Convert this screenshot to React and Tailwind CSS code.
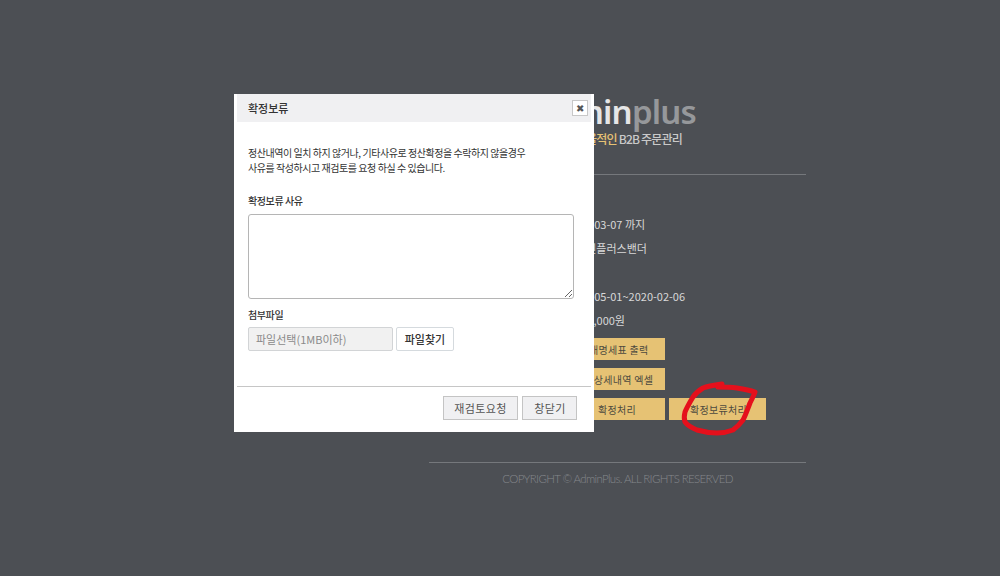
import React from "react";

const kr = "font-['Noto_Sans_CJK_KR','Noto_Sans',sans-serif]";

const PageRow = ({ children, className = "" }) => (
  <div className={`pl-[137px] text-[11px] leading-[16px] text-[#d8d8d8] whitespace-nowrap ${className}`}>{children}</div>
);

const GoldButton = ({ children, className = "" }) => (
  <button className={`h-[22px] bg-[#e6c274] text-[10px] tracking-[0.3px] text-[#4d4a3f] whitespace-nowrap ${className}`}>{children}</button>
);

const App = () => {
  return (
    <div className={`relative w-[1000px] h-[576px] overflow-hidden bg-[#4c4f54] ${kr}`}>
      {/* Page behind the dialog */}
      <div className="ml-[429px] w-[377px] pt-[92px]">
        <div className="flex justify-end pr-[110px] h-[39px]">
          <span className="font-['Noto_Sans',sans-serif] text-[33px] leading-[39px] tracking-[-0.8px] font-semibold text-[#e6e6e6]">
            Admin<span className="text-[#96989b]">plus</span>
          </span>
        </div>
        <div className="flex justify-end pr-[124px] h-[16px] text-[12px] leading-[16px] font-medium tracking-[-0.8px] text-[#c9c9c9]">
          <span><span className="text-[#e6c274]">효율적인</span> B2B 주문관리</span>
        </div>
        <div className="mt-[27px] h-px bg-[#75787c]" />

        <div className="mt-[41px] flex flex-col">
          <PageRow>2020-03-07 까지</PageRow>
          <PageRow className="mt-[8px]">어드민플러스밴더</PageRow>
          <PageRow className="mt-[32px]">2019-05-01~2020-02-06</PageRow>
          <PageRow className="mt-[8px]">1,000,000원</PageRow>
        </div>

        <div className="mt-[10px] pl-[90px] flex flex-col gap-[8px]">
          <GoldButton className="w-[146px] pl-[44px]">거래명세표 출력</GoldButton>
          <GoldButton className="w-[146px] pl-[44px]">정산상세내역 엑셀</GoldButton>
          <div className="flex gap-[4px]">
            <GoldButton className="w-[146px] pl-[50px]">확정처리</GoldButton>
            <GoldButton className="w-[97px] pl-[2px]">확정보류처리</GoldButton>
          </div>
        </div>

        <div className="mt-[42px] h-px bg-[#75787c]" />
        <p className="mt-[8px] text-center font-['Lato',sans-serif] font-light text-[11.5px] leading-[16px] tracking-[-0.65px] text-[#85888c]">
          COPYRIGHT © AdminPlus. ALL RIGHTS RESERVED
        </p>
      </div>

      {/* Hand drawn red circle */}
      <svg className="absolute left-[680px] top-[380px]" width="80" height="60" viewBox="0 0 80 60" fill="none">
        <path
          d="M42 4 C35 5 28 6 23 8 C18 11 15 14 13 17 C10 22 7 27 5 32 C4 36 4 39 5 42 C8 46 12 48 17 50 C24 52 30 53 37 53 C43 53 48 52 53 50 C57 47 60 44 63 40 C66 34 68 28 70 23 C72 19 74 15 75 12 C69 10 63 9 57 8 C50 7 44 7 38 7"
          stroke="#e5101c"
          strokeWidth="5"
          strokeLinecap="round"
          strokeLinejoin="round"
        />
      </svg>

      {/* Dialog */}
      <div className="absolute left-[234px] top-[94px] w-[360px] h-[338px] bg-white px-[3px] flex flex-col text-[#333]">
        <div className="h-[28px] shrink-0 bg-[#f0f0f2] pl-[11px] pr-[3px] flex items-center justify-between">
          <span className="text-[11px] font-medium text-[#333]">확정보류</span>
          <button className="w-[16px] h-[16px] border border-[#c8c8c8] bg-white flex items-center justify-center text-[10px] leading-none text-[#555]">
            ✖
          </button>
        </div>

        <div className="px-[11px] flex-1 flex flex-col">
          <p className="mt-[23px] text-[10px] leading-[15px] tracking-[-0.45px] whitespace-nowrap text-[#333]">
            정산내역이 일치 하지 않거나, 기타사유로 정산확정을 수락하지 않을경우
            <br />
            사유를 작성하시고 재검토를 요청 하실 수 있습니다.
          </p>

          <label className="mt-[18px] text-[10px] leading-[15px] tracking-[-0.4px] font-medium text-[#333]">확정보류 사유</label>
          <textarea className="mt-[6px] w-[326px] h-[85px] shrink-0 border border-[#b5b5b5] rounded-[3px] bg-white" />

          <label className="mt-[8px] text-[10px] leading-[15px] tracking-[-0.4px] font-medium text-[#333]">첨부파일</label>
          <div className="mt-[5px] flex gap-[3px]">
            <div className="w-[145px] h-[24px] border border-[#d2d4d6] rounded-[2px] bg-[#f1f1f1] pl-[7px] text-[11px] leading-[22px] text-[#8a8a8a]">
              파일선택(1MB이하)
            </div>
            <button className="w-[58px] h-[24px] border border-[#d5dade] rounded-[2px] bg-white text-[11px] font-medium text-[#333]">
              파일찾기
            </button>
          </div>
        </div>

        <div className="h-[46px] shrink-0 border-t border-[#c6c6c6] pr-[14px] pt-[9px] flex justify-end gap-[4px]">
          <button className="w-[75px] h-[24px] border border-[#c4c4c4] bg-[#f0f0f2] text-[11px] tracking-[0.4px] text-[#555]">
            재검토요청
          </button>
          <button className="w-[55px] h-[24px] border border-[#c4c4c4] bg-[#f0f0f2] pl-[1px] text-[11px] tracking-[0.4px] text-[#555]">
            창닫기
          </button>
        </div>
      </div>
    </div>
  );
};

export default App;
